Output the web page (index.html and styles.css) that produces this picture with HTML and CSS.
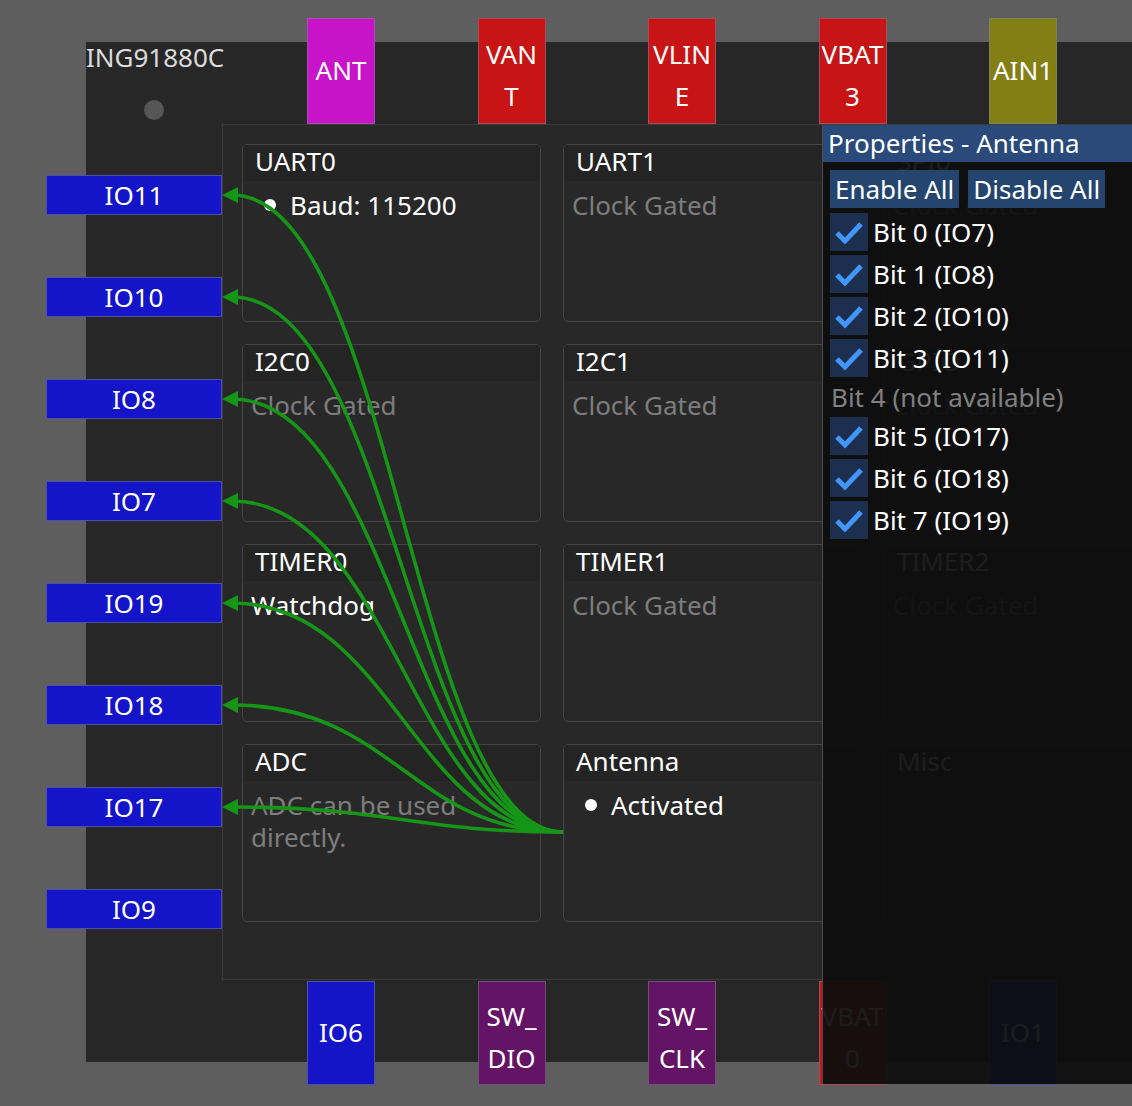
FILE: index.html
```html
<!DOCTYPE html>
<html>
<head>
<meta charset="utf-8">
<title>ING91880C</title>
<link rel="stylesheet" href="styles.css">
</head>
<body>
<div class="stage">
  <div class="chip">
    <div class="chip-head">
      <div class="chip-name">ING91880C</div>
      <div class="dot"></div>
    </div>
    <div class="panel">
      <div class="cards">
        <div class="card">
          <div class="card-title">UART0</div>
          <div class="card-body"><div class="bullet">Baud: 115200</div></div>
        </div>
        <div class="card">
          <div class="card-title">UART1</div>
          <div class="card-body muted">Clock Gated</div>
        </div>
        <div class="card">
          <div class="card-title">SPI0</div>
          <div class="card-body muted">Clock Gated</div>
        </div>
        <div class="card">
          <div class="card-title">I2C0</div>
          <div class="card-body muted">Clock Gated</div>
        </div>
        <div class="card">
          <div class="card-title">I2C1</div>
          <div class="card-body muted">Clock Gated</div>
        </div>
        <div class="card">
          <div class="card-title">GPIO</div>
          <div class="card-body muted">Clock Gated</div>
        </div>
        <div class="card">
          <div class="card-title">TIMER0</div>
          <div class="card-body">Watchdog</div>
        </div>
        <div class="card">
          <div class="card-title">TIMER1</div>
          <div class="card-body muted">Clock Gated</div>
        </div>
        <div class="card">
          <div class="card-title">TIMER2</div>
          <div class="card-body muted">Clock Gated</div>
        </div>
        <div class="card">
          <div class="card-title">ADC</div>
          <div class="card-body muted">ADC can be used directly.</div>
        </div>
        <div class="card">
          <div class="card-title">Antenna</div>
          <div class="card-body"><div class="bullet">Activated</div></div>
        </div>
        <div class="card">
          <div class="card-title">Misc</div>
          <div class="card-body"></div>
        </div>
      </div>
    </div>

    <div class="pins pins-top">
      <div class="pin pin-v mag">ANT</div>
      <div class="pin pin-v red two">VAN<br>T</div>
      <div class="pin pin-v red two">VLIN<br>E</div>
      <div class="pin pin-v red two">VBAT<br>3</div>
      <div class="pin pin-v olive">AIN1</div>
    </div>

    <div class="pins pins-left">
      <div class="pin pin-h blue">IO11</div>
      <div class="pin pin-h blue">IO10</div>
      <div class="pin pin-h blue">IO8</div>
      <div class="pin pin-h blue">IO7</div>
      <div class="pin pin-h blue">IO19</div>
      <div class="pin pin-h blue">IO18</div>
      <div class="pin pin-h blue">IO17</div>
      <div class="pin pin-h blue">IO9</div>
    </div>

    <div class="pins pins-bottom">
      <div class="pin pin-v blue">IO6</div>
      <div class="pin pin-v purple two">SW_<br>DIO</div>
      <div class="pin pin-v purple two">SW_<br>CLK</div>
      <div class="pin pin-v red two">VBAT<br>0</div>
      <div class="pin pin-v blue">IO1</div>
    </div>
  </div>

  <svg class="wires" width="1132" height="1106" viewBox="0 0 1132 1106">
    <g fill="none" stroke="#169616" stroke-width="3.6">
      <path d="M563 832 C413 832 392 195 232 195"/>
      <path d="M563 832 C413 832 392 297 232 297"/>
      <path d="M563 832 C413 832 392 399 232 399"/>
      <path d="M563 832 C413 832 392 501 232 501"/>
      <path d="M563 832 C413 832 392 603 232 603"/>
      <path d="M563 832 C413 832 392 705 232 705"/>
      <path d="M563 832 C413 832 392 807 232 807"/>
    </g>
    <g fill="#169616">
      <polygon points="222,195 238,187 238,203"/>
      <polygon points="222,297 238,289 238,305"/>
      <polygon points="222,399 238,391 238,407"/>
      <polygon points="222,501 238,493 238,509"/>
      <polygon points="222,603 238,595 238,611"/>
      <polygon points="222,705 238,697 238,713"/>
      <polygon points="222,807 238,799 238,815"/>
    </g>
  </svg>

  <div class="props">
    <div class="props-title">Properties - Antenna</div>
    <div class="props-body">
      <div class="btns">
        <div class="btn">Enable All</div>
        <div class="btn">Disable All</div>
      </div>
      <div class="row"><span class="box"><svg width="38" height="38" viewBox="0 0 38 38"><polyline points="7,20 15,28 31,11" fill="none" stroke="#4296fa" stroke-width="5"/></svg></span><span>Bit 0 (IO7)</span></div>
      <div class="row"><span class="box"><svg width="38" height="38" viewBox="0 0 38 38"><polyline points="7,20 15,28 31,11" fill="none" stroke="#4296fa" stroke-width="5"/></svg></span><span>Bit 1 (IO8)</span></div>
      <div class="row"><span class="box"><svg width="38" height="38" viewBox="0 0 38 38"><polyline points="7,20 15,28 31,11" fill="none" stroke="#4296fa" stroke-width="5"/></svg></span><span>Bit 2 (IO10)</span></div>
      <div class="row"><span class="box"><svg width="38" height="38" viewBox="0 0 38 38"><polyline points="7,20 15,28 31,11" fill="none" stroke="#4296fa" stroke-width="5"/></svg></span><span>Bit 3 (IO11)</span></div>
      <div class="na">Bit 4 (not available)</div>
      <div class="row"><span class="box"><svg width="38" height="38" viewBox="0 0 38 38"><polyline points="7,20 15,28 31,11" fill="none" stroke="#4296fa" stroke-width="5"/></svg></span><span>Bit 5 (IO17)</span></div>
      <div class="row"><span class="box"><svg width="38" height="38" viewBox="0 0 38 38"><polyline points="7,20 15,28 31,11" fill="none" stroke="#4296fa" stroke-width="5"/></svg></span><span>Bit 6 (IO18)</span></div>
      <div class="row"><span class="box"><svg width="38" height="38" viewBox="0 0 38 38"><polyline points="7,20 15,28 31,11" fill="none" stroke="#4296fa" stroke-width="5"/></svg></span><span>Bit 7 (IO19)</span></div>
    </div>
  </div>
</div>
</body>
</html>
```

FILE: styles.css
```css
html, body {
  margin: 0;
  padding: 0;
}
body {
  background: #5e5e5e;
  font-family: "Noto Sans", "Open Sans", "DejaVu Sans", sans-serif;
  font-size: 26px;
  color: #ffffff;
  overflow: hidden;
}
.stage {
  position: relative;
  width: 1132px;
  height: 1106px;
  overflow: hidden;
  padding: 42px 0 0 86px;
  box-sizing: border-box;
}
.chip {
  position: relative;
  width: 1100px;
  height: 1020px;
  background: #272727;
  display: grid;
  grid-template-columns: 136px 1000px;
  grid-template-rows: 82px 856px;
}
.chip-head {
  grid-column: 1;
  grid-row: 1;
}
.chip-name {
  line-height: 30px;
  color: #dcdcdc;
  white-space: nowrap;
}
.dot {
  width: 20px;
  height: 20px;
  border-radius: 50%;
  background: #565656;
  margin: 28px 0 0 58px;
}
.panel {
  grid-column: 2;
  grid-row: 2;
  background: #282828;
  border: 1px solid #3a3a3a;
  box-sizing: border-box;
  padding: 19px 0 0 19px;
}
.cards {
  display: grid;
  grid-template-columns: repeat(3, 299px);
  grid-auto-rows: 178px;
  column-gap: 22px;
  row-gap: 22px;
}
.card {
  border: 1px solid #454545;
  border-radius: 5px;
  box-sizing: border-box;
  overflow: hidden;
  background: #282828;
}
.card-title {
  height: 36px;
  line-height: 33px;
  background: #242424;
  padding-left: 12px;
}
.card-body {
  padding: 8px 8px 0 8px;
  line-height: 32px;
}
.muted {
  color: #7d7d7d;
}
.bullet {
  display: flex;
  align-items: center;
}
.bullet::before {
  content: "";
  display: inline-block;
  width: 12px;
  height: 12px;
  border-radius: 50%;
  background: #ffffff;
  margin: 0 14px 0 13px;
}

/* pins */
.pins {
  position: absolute;
  display: flex;
}
.pins-top {
  left: 221px;
  top: -24px;
  gap: 102.5px;
}
.pins-bottom {
  left: 221px;
  top: 939px;
  gap: 102.5px;
}
.pins-left {
  left: -40px;
  top: 133px;
  flex-direction: column;
  gap: 62px;
}
.pin {
  box-sizing: border-box;
  border: 1px solid rgba(130, 130, 150, 0.55);
  display: flex;
  align-items: center;
  justify-content: center;
  text-align: center;
  color: #ffffff;
  line-height: 42px;
  white-space: nowrap;
  padding-bottom: 3px;
}
.pin-v {
  width: 68px;
  height: 106px;
}
.pins-bottom .pin-v {
  height: 104px;
}
.pin-h {
  width: 176px;
  height: 40px;
  line-height: 38px;
  padding-bottom: 1px;
}
.two {
  padding-top: 8px;
  padding-bottom: 0;
}
.blue { background: #1414c8; }
.red { background: #c81414; }
.mag { background: #c814c8; }
.olive { background: #847f14; }
.purple { background: #641464; }

/* wires */
.wires {
  position: absolute;
  left: 0;
  top: 0;
  z-index: 2;
  pointer-events: none;
}

/* properties window */
.props {
  position: absolute;
  left: 822px;
  top: 124px;
  width: 320px;
  height: 960px;
  background: rgba(14, 14, 14, 0.94);
  border-left: 1px solid #4d4d4d;
  border-top: 1px solid #3d3d3d;
  box-sizing: border-box;
  z-index: 3;
}
.props-title {
  height: 37px;
  line-height: 37px;
  background: #294a7a;
  padding-left: 5px;
  white-space: nowrap;
}
.props-body {
  padding: 8px 0 0 7px;
}
.btns {
  display: flex;
  gap: 9px;
}
.btn {
  height: 38px;
  line-height: 38px;
  padding: 0 5px;
  background: #24456e;
  white-space: nowrap;
}
.row {
  display: flex;
  align-items: center;
  gap: 5px;
  height: 38px;
  margin-top: 4px;
  white-space: nowrap;
}
.btns + .row {
  margin-top: 5px;
}
.box {
  width: 38px;
  height: 38px;
  background: #1d2f4e;
  display: block;
}
.box svg {
  display: block;
}
.na {
  height: 32px;
  line-height: 32px;
  margin-top: 4px;
  color: #808080;
  padding-left: 1px;
  white-space: nowrap;
}
```
